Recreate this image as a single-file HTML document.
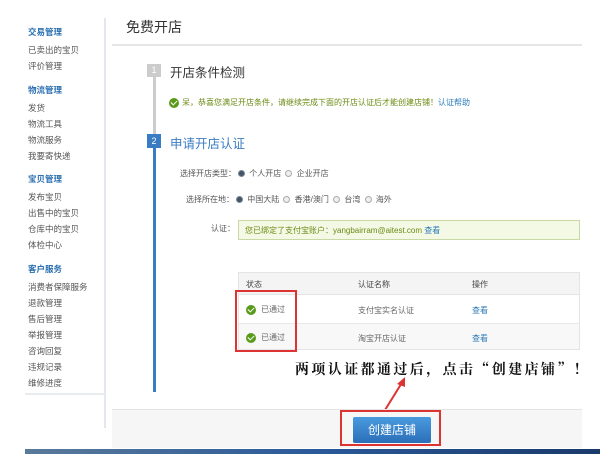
<!DOCTYPE html>
<html><head><meta charset="utf-8"><style>
*{margin:0;padding:0;box-sizing:border-box}
body{width:600px;height:454px;overflow:hidden;background:#fff;font-family:"Liberation Sans","Noto Sans CJK SC",sans-serif;position:relative;color:#333}
.a{position:absolute;white-space:nowrap}
.sb{font-size:8.5px;color:#555;left:28px}
.sh{font-size:8.5px;color:#2a6fb0;font-weight:bold;left:28px}
.s{font-size:8px;color:#555}
.r{display:inline-block;width:7px;height:7px;border-radius:50%;border:1px solid #aaa;background:#eee;vertical-align:-1px;margin:0 2px}
.r.on{background:#456;border-color:#789}
.ok{display:inline-block;width:10px;height:10px;border-radius:50%;background:#5a9a1a;vertical-align:middle;position:relative}
.ok:after{content:"";position:absolute;left:3px;top:1.5px;width:3px;height:5px;border:solid #fff;border-width:0 1.5px 1.5px 0;transform:rotate(45deg)}
.row{display:flex;align-items:center;gap:5px}
</style></head><body>
<div class="a" style="left:104px;top:18px;width:2px;height:410px;background:#e4e8ee"></div>
<div class="a sh" style="top:26px">交易管理</div>
<div class="a sb" style="top:44px">已卖出的宝贝</div>
<div class="a sb" style="top:60px">评价管理</div>
<div class="a sh" style="top:84px">物流管理</div>
<div class="a sb" style="top:102px">发货</div>
<div class="a sb" style="top:118px">物流工具</div>
<div class="a sb" style="top:134px">物流服务</div>
<div class="a sb" style="top:150px">我要寄快递</div>
<div class="a sh" style="top:173px">宝贝管理</div>
<div class="a sb" style="top:191px">发布宝贝</div>
<div class="a sb" style="top:207px">出售中的宝贝</div>
<div class="a sb" style="top:223px">仓库中的宝贝</div>
<div class="a sb" style="top:239px">体检中心</div>
<div class="a sh" style="top:263px">客户服务</div>
<div class="a sb" style="top:281px">消费者保障服务</div>
<div class="a sb" style="top:297px">退款管理</div>
<div class="a sb" style="top:313px">售后管理</div>
<div class="a sb" style="top:329px">举报管理</div>
<div class="a sb" style="top:345px">咨询回复</div>
<div class="a sb" style="top:361px">违规记录</div>
<div class="a sb" style="top:377px">维修进度</div>
<div class="a" style="left:25px;top:393px;width:80px;height:2px;background:#e8ecf0"></div>

<div class="a" style="left:126px;top:17px;font-size:14px;color:#333">免费开店</div>
<div class="a" style="left:112px;top:44px;width:470px;height:2px;background:#e6e6e6"></div>

<div class="a" style="left:153px;top:76px;width:3px;height:60px;background:#ccc"></div>
<div class="a" style="left:153px;top:146px;width:3px;height:246px;background:#3a7cc4"></div>
<div class="a" style="left:147px;top:64px;width:14px;height:13px;background:#ccc;color:#fff;font-size:9px;text-align:center;line-height:13px">1</div>
<div class="a" style="left:170px;top:62px;font-size:12.5px;color:#333">开店条件检测</div>
<div class="a row" style="left:169px;top:97px;font-size:8px;color:#6a8a10;gap:3px"><span class="ok"></span><span>呆，恭喜您满足开店条件，请继续完成下面的开店认证后才能创建店铺！<span style="color:#2a7ab8">认证帮助</span></span></div>
<div class="a" style="left:147px;top:134px;width:14px;height:14px;background:#3a7cc4;color:#fff;font-size:9px;text-align:center;line-height:14px">2</div>
<div class="a" style="left:170px;top:133px;font-size:12.5px;color:#3a7cc4">申请开店认证</div>

<div class="a s" style="left:180px;top:168px">选择开店类型：<span class="r on"></span> 个人开店 <span class="r"></span> 企业开店</div>
<div class="a s" style="left:186px;top:194px">选择所在地：<span class="r on"></span> 中国大陆 <span class="r"></span> 香港/澳门 <span class="r"></span> 台湾 <span class="r"></span> 海外</div>
<div class="a s" style="left:211px;top:223px">认证：</div>
<div class="a" style="left:238px;top:220px;width:342px;height:20px;background:#f4f9e6;border:1px solid #c9d9a4;font-size:8px;color:#6a8a10;padding:4px 6px">您已绑定了支付宝账户：yangbairram@aitest.com <span style="color:#2a7ab8">查看</span></div>

<div class="a" style="left:238px;top:272px;width:342px;height:78px;border:1px solid #e4e4e4"></div>
<div class="a" style="left:239px;top:273px;width:340px;height:22px;background:#f4f4f4;border-bottom:1px solid #e4e4e4"></div>
<div class="a" style="left:239px;top:323px;width:340px;height:26px;background:#f8f8f8;border-top:1px solid #e8e8e8"></div>
<div class="a s" style="left:246px;top:279px;color:#444">状态</div>
<div class="a s" style="left:358px;top:279px;color:#444">认证名称</div>
<div class="a s" style="left:472px;top:279px;color:#444">操作</div>
<div class="a s row" style="left:246px;top:304px"><span class="ok"></span><span style="color:#666">已通过</span></div>
<div class="a s" style="left:358px;top:305px;color:#666">支付宝实名认证</div>
<div class="a s" style="left:472px;top:305px;color:#2a7ab8">查看</div>
<div class="a s row" style="left:246px;top:332px"><span class="ok"></span><span style="color:#666">已通过</span></div>
<div class="a s" style="left:358px;top:333px;color:#666">淘宝开店认证</div>
<div class="a s" style="left:472px;top:333px;color:#2a7ab8">查看</div>
<div class="a" style="left:235px;top:290px;width:62px;height:62px;border:2px solid #d33"></div>

<div class="a" style="left:295px;top:359px;font-size:14px;font-weight:bold;color:#111;letter-spacing:2.4px;font-family:'Noto Serif CJK SC',serif">两项认证都通过后，点击“创建店铺”！</div>
<svg class="a" style="left:375px;top:375px" width="40" height="40"><line x1="10" y1="35" x2="28" y2="6" stroke="#d33" stroke-width="2"/><polygon points="30,2 22,9 30,12" fill="#d33"/></svg>

<div class="a" style="left:112px;top:409px;width:470px;height:1px;background:#e4e4e4"></div>
<div class="a" style="left:112px;top:410px;width:470px;height:38px;background:#f6f6f6"></div>
<div class="a" style="left:353px;top:417px;width:78px;height:26px;background:linear-gradient(#4a9ade,#2a6fb8);border-radius:2px;color:#fff;font-size:12px;text-align:center;line-height:26px">创建店铺</div>
<div class="a" style="left:340px;top:410px;width:101px;height:36px;border:2px solid #d33"></div>
<div class="a" style="left:25px;top:449px;width:575px;height:5px;background:linear-gradient(90deg,#5a7a9a,#2a5a9a,#1a3a6a)"></div>
</body></html>
